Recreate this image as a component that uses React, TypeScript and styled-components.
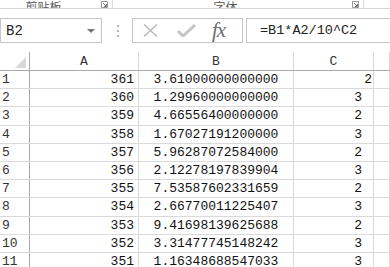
import styled, { createGlobalStyle } from 'styled-components';

const GlobalStyle = createGlobalStyle`
	html, body {
		margin: 0;
		padding: 0;
		background: #ffffff;
	}
`;

const Window = styled.div`
	width: 390px;
	height: 267px;
	overflow: hidden;
	background: #ffffff;
	font-family: 'Liberation Mono', 'DejaVu Sans Mono', monospace;
	color: #1a1a1a;
`;

const RibbonStrip = styled.div`
	height: 8px;
	border-bottom: 1px solid #d6d6d6;
	display: flex;
	overflow: hidden;
`;

const RibbonGroup = styled.div<{ $width: number }>`
	width: ${(props) => props.$width}px;
	flex: none;
	display: flex;
	align-items: flex-end;
	border-right: 1px solid #dcdcdc;
`;

const RibbonLabel = styled.span<{ $shift: number }>`
	flex: 1;
	text-align: center;
	font-family: 'Noto Sans CJK SC', sans-serif;
	font-size: 12px;
	line-height: 12px;
	margin-bottom: -5px;
	padding-right: ${(props) => props.$shift}px;
	color: #5a5a5a;
`;

const Launcher = styled.svg`
	width: 7px;
	height: 7px;
	margin: 0 4px 0 0;
	flex: none;
`;

const FormulaBar = styled.div`
	margin-top: 9px;
	height: 25px;
	display: flex;
	align-items: stretch;
`;

const NameBox = styled.div`
	width: 102px;
	box-sizing: border-box;
	border: 1px solid #c6c6c6;
	display: flex;
	align-items: center;
	justify-content: space-between;
	padding: 0 6px 0 5px;
	font-size: 14px;
	color: #222;
`;

const DropArrow = styled.span`
	width: 0;
	height: 0;
	border-left: 4px solid transparent;
	border-right: 4px solid transparent;
	border-top: 4px solid #777;
`;

const Grip = styled.div`
	width: 30px;
	display: flex;
	flex-direction: column;
	align-items: center;
	justify-content: center;
	gap: 3px;
	padding-left: 2px;
	box-sizing: border-box;
`;

const GripDot = styled.span`
	width: 2px;
	height: 2px;
	background: #b5b5b5;
`;

const FxGroup = styled.div`
	width: 111px;
	box-sizing: border-box;
	border: 1px solid #c6c6c6;
	display: flex;
	align-items: center;
	padding-left: 10px;
	gap: 19px;
`;

const FxLabel = styled.span`
	font-family: 'Liberation Serif', serif;
	font-style: italic;
	font-size: 21px;
	color: #6e6e6e;
	letter-spacing: -1px;
	margin-left: -3px;
	line-height: 1;
`;

const FormulaInput = styled.div`
	flex: 1;
	margin-left: 3px;
	margin-right: -4px;
	border: 1px solid #c6c6c6;
	display: flex;
	align-items: center;
	padding-left: 13px;
	font-size: 13.5px;
	color: #222;
`;

const Sheet = styled.div`
	margin-top: 9px;
`;

const COLS = '30px 109px 155px 80px 1fr';

const HeaderRow = styled.div`
	display: grid;
	grid-template-columns: ${COLS};
	height: 19px;
	box-sizing: border-box;
	border-bottom: 1px solid #a9a9a9;
`;

const Corner = styled.div`
	border-right: 1px solid #a9a9a9;
	display: flex;
	align-items: flex-end;
	justify-content: flex-end;
	padding: 0 3px 2px 0;
`;

const Triangle = styled.span`
	width: 0;
	height: 0;
	border-left: 11px solid transparent;
	border-bottom: 11px solid #d8d8d8;
`;

const ColHead = styled.div`
	border-right: 1px solid #d8d8d8;
	display: flex;
	align-items: center;
	justify-content: center;
	font-size: 13px;
	color: #333;
`;

const DataRow = styled.div`
	display: grid;
	grid-template-columns: ${COLS};
	height: 18.2px;
	box-sizing: border-box;
	border-bottom: 1px solid #dadada;
`;

const RowHead = styled.div`
	border-right: 1px solid #a9a9a9;
	display: flex;
	align-items: center;
	padding-left: 2px;
	font-size: 13px;
	color: #333;
`;

const Cell = styled.div<{ $align: 'left' | 'center' | 'right'; $pad?: number }>`
	border-right: 1px solid #dadada;
	display: flex;
	align-items: center;
	justify-content: ${(props) =>
		props.$align === 'left' ? 'flex-start' : props.$align === 'center' ? 'center' : 'flex-end'};
	padding-right: ${(props) => props.$pad ?? 0}px;
	font-size: 13px;
	color: #111;
	white-space: nowrap;
	overflow: hidden;
`;

const rows: [number, string, number][] = [
	[361, '3.61000000000000', 2],
	[360, '1.29960000000000', 3],
	[359, '4.66556400000000', 2],
	[358, '1.67027191200000', 3],
	[357, '5.96287072584000', 2],
	[356, '2.12278197839904', 3],
	[355, '7.53587602331659', 2],
	[354, '2.66770011225407', 3],
	[353, '9.41698139625688', 2],
	[352, '3.31477745148242', 3],
	[351, '1.16348688547033', 3]
];

function LauncherIcon() {
	return (
		<Launcher viewBox="0 0 7 7">
			<path d="M0.5 0.5h6v6h-6z" fill="none" stroke="#9a9a9a" />
			<path d="M2 2l3.5 3.5M5.5 3v2.5H3" fill="none" stroke="#777" />
		</Launcher>
	);
}

function App() {
	return (
		<Window>
			<GlobalStyle />
			<RibbonStrip>
				<RibbonGroup $width={112}>
					<RibbonLabel $shift={14}>剪贴板</RibbonLabel>
					<LauncherIcon />
				</RibbonGroup>
				<RibbonGroup $width={250}>
					<RibbonLabel $shift={14}>字体</RibbonLabel>
					<LauncherIcon />
				</RibbonGroup>
			</RibbonStrip>
			<FormulaBar>
				<NameBox>
					B2
					<DropArrow />
				</NameBox>
				<Grip>
					<GripDot />
					<GripDot />
					<GripDot />
				</Grip>
				<FxGroup>
					<svg width="15" height="13" viewBox="0 0 15 13">
						<path d="M1 0.5L14 12.5M14 0.5L1 12.5" stroke="#bdbdbd" strokeWidth="1.6" fill="none" />
					</svg>
					<svg width="19" height="13" viewBox="0 0 19 13">
						<path d="M1 7l5 5L18 1" stroke="#c4c4c4" strokeWidth="3" fill="none" />
					</svg>
					<FxLabel>fx</FxLabel>
				</FxGroup>
				<FormulaInput>=B1*A2/10^C2</FormulaInput>
			</FormulaBar>
			<Sheet>
				<HeaderRow>
					<Corner>
						<Triangle />
					</Corner>
					<ColHead>A</ColHead>
					<ColHead>B</ColHead>
					<ColHead>C</ColHead>
					<ColHead />
				</HeaderRow>
				{rows.map(([a, b, c], i) => (
					<DataRow key={i}>
						<RowHead>{i + 1}</RowHead>
						<Cell $align="right" $pad={4}>
							{a}
						</Cell>
						<Cell $align="center" $pad={0}>
							{b}
						</Cell>
						<Cell $align="right" $pad={i === 0 ? 1 : 11}>
							{c}
						</Cell>
						<Cell $align="left" />
					</DataRow>
				))}
			</Sheet>
		</Window>
	);
}

export default App;
